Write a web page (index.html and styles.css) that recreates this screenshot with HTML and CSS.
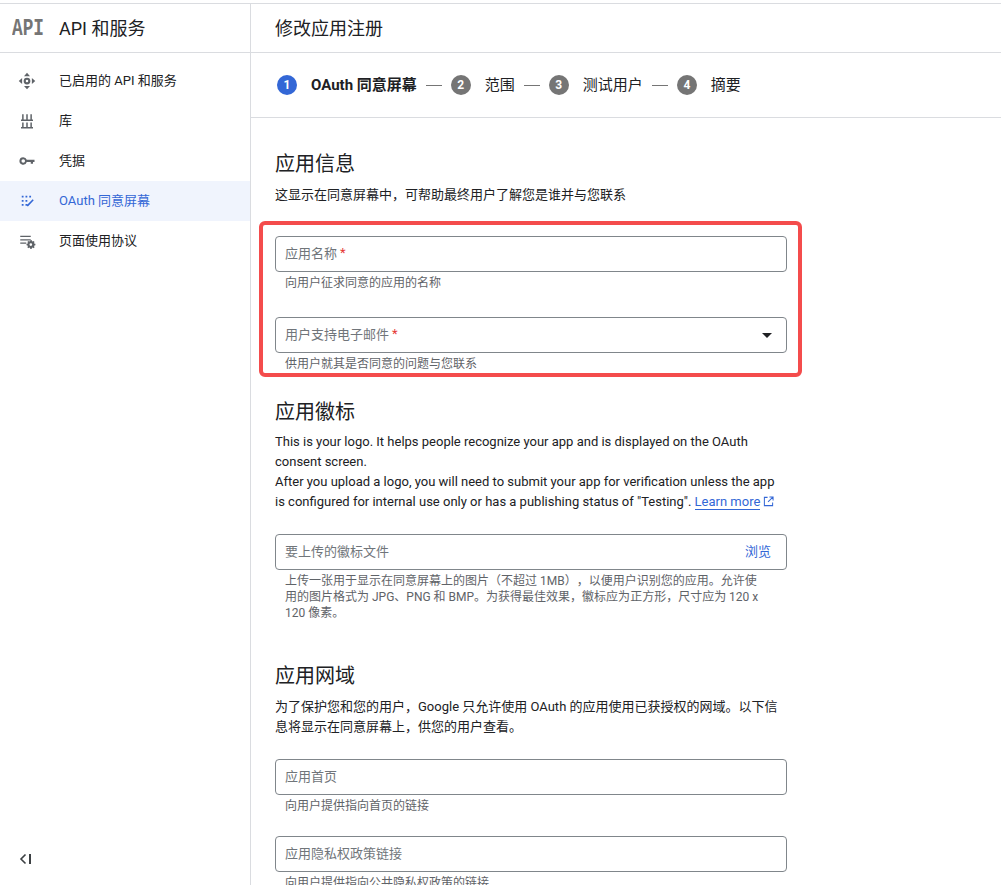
FILE: index.html
```html
<!DOCTYPE html>
<html lang="zh-CN">
<head>
<meta charset="utf-8">
<title>修改应用注册</title>
<link rel="stylesheet" href="styles.css">
</head>
<body>
<div class="app">
  <aside class="sidebar">
    <div class="brand"><span class="api-logo">API</span><span class="brand-name">API 和服务</span></div>
    <nav class="nav">
      <a class="nav-item"><svg class="nav-icon" viewBox="0 0 24 24"><path d="M12 1l4 4.500H8zM12 23l-4-4.500h8zM1 12l4.500-4v8zM23 12l-4.500 4V8z"/><path fill-rule="evenodd" d="M12 7.500a4.500 4.500 0 1 1 0 9 4.500 4.500 0 0 1 0-9zm0 2.800a1.700 1.700 0 1 0 0 3.400 1.700 1.700 0 0 0 0-3.400z"/></svg><span>已启用的 API 和服务</span></a>
      <a class="nav-item"><svg class="nav-icon" viewBox="0 0 24 24"><path d="M5.500 3h2v7h-2zM11 3h2v7h-2zM16.500 3h2v7h-2zM4 10h16v2H4zM5.500 14h2v6h-2zM11 14h2v6h-2zM16.500 14h2v6h-2zM4 20h16v2H4z"/></svg><span>库</span></a>
      <a class="nav-item"><svg class="nav-icon" viewBox="0 0 24 24"><path fill-rule="evenodd" d="M7 7a5 5 0 0 1 4.700 3.400H22v3h-2v2.400h-3v-2.400h-5.300A5 5 0 1 1 7 7zm0 2.600a2.400 2.400 0 1 0 0 4.800 2.400 2.400 0 0 0 0-4.800z"/></svg><span>凭据</span></a>
      <a class="nav-item active"><svg class="nav-icon" viewBox="0 0 24 24"><path d="M5 5h2.400v2.400H5zM10 5h2.400v2.400H10zM15 5h2.400v2.400H15zM5 10.500h2.400v2.400H5zM10 10.500h2.400v2.400H10zM5 16h2.400v2.400H5zM10 16h2.400v2.400H10zM19.500 9.500l1.500 1.500-7.500 8H12v-1.600z"/></svg><span>OAuth 同意屏幕</span></a>
      <a class="nav-item"><svg class="nav-icon" viewBox="0 0 24 24"><path d="M3 5h14v1.700H3zM3 9.500h14v1.700H3zM3 14h8v1.700H3z"/><path fill-rule="evenodd" d="M17 11.500l1.200.3.300 1.300 1.200.5 1.100-.7 1.300 1.300-.7 1.100.5 1.200 1.300.3v1.800l-1.300.3-.5 1.200.7 1.100-1.300 1.300-1.100-.7-1.200.5-.3 1.300h-1.800l-.3-1.300-1.200-.5-1.100.7-1.300-1.300.7-1.100-.5-1.200-1.300-.3v-1.800l1.300-.3.5-1.200-.7-1.100 1.300-1.300 1.100.7 1.200-.5zm.1 4.500a1.800 1.800 0 1 0 0 3.600 1.800 1.800 0 0 0 0-3.600z" transform="translate(0 -1)"/></svg><span>页面使用协议</span></a>
    </nav>
    <button class="collapse" aria-label="收起"><svg viewBox="0 0 14 12" width="14" height="12"><path d="M6.500 1.500L2 6l4.500 4.500" fill="none" stroke="#3c4043" stroke-width="1.600"/><path d="M10 1h2v10h-2z" fill="#3c4043"/></svg></button>
  </aside>

  <main class="main">
    <header class="page-title"><h1>修改应用注册</h1></header>
    <div class="stepper">
      <span class="badge current">1</span><span class="step-label current">OAuth 同意屏幕</span><span class="dash"></span>
      <span class="badge">2</span><span class="step-label">范围</span><span class="dash"></span>
      <span class="badge">3</span><span class="step-label">测试用户</span><span class="dash"></span>
      <span class="badge">4</span><span class="step-label">摘要</span>
    </div>
    <div class="content">
      <section class="section-info">
        <h2>应用信息</h2>
        <p class="desc">这显示在同意屏幕中，可帮助最终用户了解您是谁并与您联系</p>
        <div class="highlight-wrap">
          <div class="highlight"></div>
          <div class="field"><div class="box">应用名称<i class="req">*</i></div><div class="hint">向用户征求同意的应用的名称</div></div>
          <div class="field"><div class="box">用户支持电子邮件<i class="req">*</i><svg class="caret" viewBox="0 0 10 5" width="10" height="5"><path d="M0 0h10L5 5z"/></svg></div><div class="hint">供用户就其是否同意的问题与您联系</div></div>
        </div>
      </section>

      <section class="section-logo">
        <h2>应用徽标</h2>
        <p class="desc">This is your logo. It helps people recognize your app and is displayed on the OAuth consent screen.<br>After you upload a logo, you will need to submit your app for verification unless the app is configured for internal use only or has a publishing status of "Testing". <a class="link">Learn more</a><svg class="ext" viewBox="0 0 12 12" width="11" height="11"><path d="M5 1.500H1.500v9h9V7M7 1h4v4M11 1L5.500 6.500" fill="none" stroke="#3367d6" stroke-width="1.100"/></svg></p>
        <div class="field upload"><div class="box">要上传的徽标文件<span class="browse">浏览</span></div><div class="hint">上传一张用于显示在同意屏幕上的图片（不超过 1MB），以便用户识别您的应用。允许使用的图片格式为 JPG、PNG 和 BMP。为获得最佳效果，徽标应为正方形，尺寸应为 120 x 120 像素。</div></div>
      </section>

      <section class="section-domain">
        <h2>应用网域</h2>
        <p class="desc">为了保护您和您的用户，Google 只允许使用 OAuth 的应用使用已获授权的网域。以下信息将显示在同意屏幕上，供您的用户查看。</p>
        <div class="field"><div class="box">应用首页</div><div class="hint">向用户提供指向首页的链接</div></div>
        <div class="field"><div class="box">应用隐私权政策链接</div><div class="hint">向用户提供指向公共隐私权政策的链接</div></div>
      </section>
    </div>
  </main>
</div>
</body>
</html>
```

FILE: styles.css
```css
* { box-sizing: border-box; }
html, body { margin: 0; height: 100%; overflow: hidden; background: #fff; }
body {
  font-family: Roboto, "Noto Sans CJK SC", sans-serif;
  color: #202124;
  font-size: 13px;
  padding-top: 3px;
  text-spacing-trim: space-all;
}
.app {
  display: flex;
  height: 882px;
  border-top: 1px solid #dadce0;
  overflow: hidden;
}
.sidebar {
  width: 251px;
  flex: none;
  border-right: 1px solid #dadce0;
  display: flex;
  flex-direction: column;
}
.brand {
  height: 49px;
  flex: none;
  border-bottom: 1px solid #dadce0;
  display: flex;
  align-items: center;
  padding-left: 12px;
  padding-bottom: 2px;
}
.api-logo {
  width: 47px;
  margin-top: 4px;
  font-family: "Liberation Mono", monospace;
  font-weight: 700;
  font-size: 24px;
  line-height: 24px;
  color: #757575;
  transform: scaleX(.74);
  transform-origin: left center;
}
.brand-name { font-size: 18px; }
.nav { padding-top: 8px; flex: 1; }
.nav-item {
  height: 40px;
  display: flex;
  align-items: center;
  padding-left: 18px;
  gap: 23px;
  color: #202124;
}
.nav-item span { padding-bottom: 4px; }
.nav-icon { width: 18px; height: 18px; fill: #5f6368; flex: none; }
.nav-item.active { background: #f0f4fd; color: #3367d6; }
.nav-item.active .nav-icon { fill: #3367d6; }
.collapse {
  border: 0;
  background: none;
  padding: 0;
  margin: 0 0 20px 19px;
  width: 14px;
  height: 12px;
  display: block;
}
.main { flex: 1; min-width: 0; }
.page-title {
  height: 49px;
  border-bottom: 1px solid #dadce0;
  display: flex;
  align-items: center;
  padding-left: 24px;
  padding-bottom: 2px;
}
h1 { margin: 0; font-size: 18px; font-weight: 400; }
.stepper {
  height: 65px;
  border-bottom: 1px solid #dadce0;
  display: flex;
  align-items: center;
  padding-left: 26px;
}
.badge {
  width: 20px;
  height: 20px;
  border-radius: 50%;
  background: #757575;
  color: #fff;
  font-size: 12px;
  font-weight: 700;
  display: flex;
  align-items: center;
  justify-content: center;
  margin-right: 14px;
}
.badge.current { background: #3367d6; }
.step-label { font-size: 15px; padding-bottom: 4px; }
.step-label.current { font-weight: 700; }
.dash {
  width: 16px;
  height: 1px;
  background: #757575;
  margin: 0 9px;
}
.content { padding: 33px 0 0 24px; width: 536px; }
h2 { margin: 0; font-size: 20px; font-weight: 400; line-height: 26px; }
.desc { margin: 8px 0 0; line-height: 20px; font-size: 13px; }
.highlight-wrap { position: relative; margin-top: 31px; }
.highlight {
  position: absolute;
  left: -16px;
  right: -15px;
  top: -15px;
  bottom: -5px;
  border: 4px solid #f44c4c;
  border-radius: 6px;
}
.field { margin-bottom: 26px; }
.field:last-child { margin-bottom: 0; }
.box {
  height: 36px;
  border: 1px solid #80868b;
  border-radius: 4px;
  padding-left: 9px;
  padding-bottom: 4px;
  display: flex;
  align-items: center;
  color: #70757a;
  font-size: 13px;
}
.req { color: #e53935; font-style: normal; margin-left: 3px; }
.caret { margin-left: auto; margin-right: 14px; fill: #202124; margin-top: 4px; }
.browse { margin-left: auto; margin-right: 15px; color: #3367d6; }
.hint {
  padding: 0 24px 0 10px;
  margin-top: 3px;
  font-size: 12px;
  line-height: 16px;
  color: #5f6368;
}
.section-logo { margin-top: 27px; }
.section-logo .desc { margin-top: 7px; }
.link { color: #3367d6; border-bottom: 1px solid #3367d6; }
.ext { margin-left: 3px; vertical-align: -1px; }
.upload { margin-top: 22px; }
.section-domain { margin-top: 42px; }
.section-domain .field { margin-bottom: 22px; }
.section-domain .field:first-of-type { margin-top: 22px; }
```
